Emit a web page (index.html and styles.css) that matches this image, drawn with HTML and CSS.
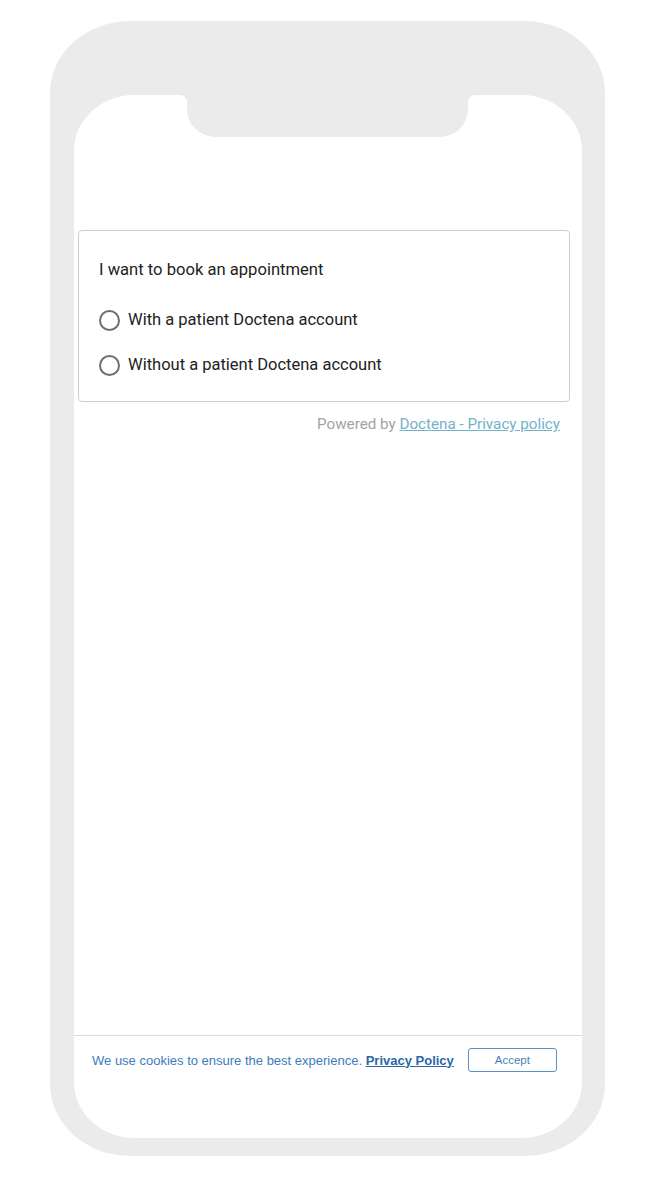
FILE: index.html
```html
<!DOCTYPE html>
<html lang="en">
<head>
    <meta charset="UTF-8">
    <meta name="viewport" content="width=device-width, initial-scale=1.0">
    <title>Doctena Booking</title>
    <link rel="stylesheet" href="styles.css">
</head>
<body>
    <div class="phone">
        <div class="screen">
            <svg class="notch" width="297" height="42" viewBox="0 0 297 42">
                <path d="M0 0 H297 Q289 0 289 8 V14 A28 28 0 0 1 261 42 H36 A28 28 0 0 1 8 14 V8 Q8 0 0 0 Z" fill="#ebebeb"/>
            </svg>

            <div class="widget">
                <div class="card">
                    <div class="card-title">I want to book an appointment</div>
                    <label class="option">
                        <span class="radio"></span>
                        <span>With a patient Doctena account</span>
                    </label>
                    <label class="option">
                        <span class="radio"></span>
                        <span>Without a patient Doctena account</span>
                    </label>
                </div>
                <div class="powered">
                    Powered by <a href="#">Doctena </a><a href="#">- Privacy policy</a>
                </div>
            </div>

            <div class="cookie-bar">
                <p class="cookie-text">We use cookies to ensure the best experience. <a href="#">Privacy Policy</a></p>
                <button class="accept-btn">Accept</button>
            </div>
        </div>
    </div>
</body>
</html>
```

FILE: styles.css
```css
:root {
    --frame-color: #ebebeb;
    --text-color: #222222;
    --muted-color: #a3a3a3;
    --link-color: #73b2c9;
    --cookie-color: #3d7cbd;
}

* {
    margin: 0;
    padding: 0;
    box-sizing: border-box;
}

body {
    font-family: Roboto, 'Liberation Sans', sans-serif;
    background-color: #ffffff;
    color: var(--text-color);
    width: 651px;
    height: 1188px;
    overflow: hidden;
}

.phone {
    width: 555px;
    height: 1135px;
    margin: 21px 0 0 50px;
    background-color: var(--frame-color);
    border-radius: 80px / 72px;
    padding: 74px 23px 18px 24px;
}

.screen {
    position: relative;
    height: 100%;
    background-color: #ffffff;
    border-radius: 60px / 56px;
    display: flex;
    flex-direction: column;
}

.notch {
    position: absolute;
    top: 0;
    left: 105px;
    display: block;
}

.widget {
    margin: 135px 12px 0 4px;
}

.card {
    border: 1px solid #cfcfcf;
    border-radius: 4px;
    height: 172px;
    padding: 29px 20px 0;
}

.card-title {
    font-size: 16.6px;
    line-height: 20px;
    margin-bottom: 29px;
}

.option {
    display: flex;
    align-items: center;
    gap: 8px;
    font-size: 16.5px;
    line-height: 20px;
    height: 22px;
    margin-bottom: 23px;
    cursor: pointer;
}

.radio {
    width: 21px;
    height: 21px;
    border: 2px solid #6f6f6f;
    border-radius: 50%;
    flex-shrink: 0;
}

.powered {
    text-align: right;
    font-size: 15.2px;
    line-height: 18px;
    color: var(--muted-color);
    padding: 13px 10px 0 0;
}

.powered a {
    color: var(--link-color);
    text-decoration: underline;
}

.cookie-bar {
    margin-top: auto;
    margin-bottom: 66px;
    border-top: 1px solid #dcdcdc;
    display: flex;
    align-items: center;
    padding: 12px 0 0 18px;
    gap: 14px;
}

.cookie-text {
    font-family: 'Liberation Sans', Arial, sans-serif;
    font-size: 13px;
    color: var(--cookie-color);
}

.cookie-text a {
    color: #2a66a8;
    font-weight: bold;
    text-decoration: underline;
}

.accept-btn {
    width: 89px;
    height: 24px;
    border: 1px solid #5d8fc6;
    border-radius: 3px;
    background-color: #ffffff;
    color: #4a7db5;
    font-family: 'Liberation Sans', Arial, sans-serif;
    font-size: 11.5px;
    cursor: pointer;
}
```
